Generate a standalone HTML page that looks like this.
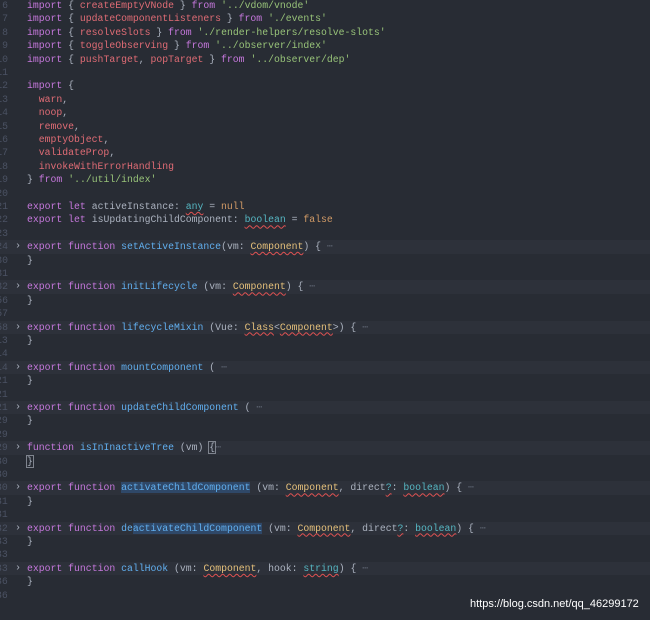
<!DOCTYPE html>
<html><head><meta charset="utf-8"><style>
html,body{margin:0;padding:0;}
body{width:650px;height:620px;background:#282c34;overflow:hidden;position:relative;font-family:"Liberation Mono",monospace;font-size:9.8px;color:#abb2bf;}
.l{position:absolute;left:0;width:650px;height:13.4px;line-height:13.4px;white-space:pre;}
.n{position:absolute;left:-4px;width:12px;text-align:right;color:#4b5263;overflow:hidden;}
.c{position:absolute;left:27px;}
.f{background:#2d313a;}
.ar{position:absolute;left:15px;color:#abb2bf;font-size:10px;}
.k{color:#c678dd}.r{color:#e06c75}.g{color:#98c379}.b{color:#61afef}.y{color:#e5c07b}.cy{color:#56b6c2}.o{color:#d19a66}
.w{text-decoration:underline wavy #e05252;text-decoration-thickness:1px;text-underline-offset:2px;}
.d{color:#5c6370}
.sel{background:#2f4868}
.bx{outline:1px solid #7f848e;}
.wm{position:absolute;left:470px;top:598px;font-family:"Liberation Sans",sans-serif;font-size:11px;color:#fff;}
</style></head><body>
<div class="l" style="top:-1px"><span class="n">6</span><span class="c"><span class="k">import</span> { <span class="r">createEmptyVNode</span> } <span class="k">from</span> <span class="g">'../vdom/vnode'</span></span></div>
<div class="l" style="top:12.4px"><span class="n">7</span><span class="c"><span class="k">import</span> { <span class="r">updateComponentListeners</span> } <span class="k">from</span> <span class="g">'./events'</span></span></div>
<div class="l" style="top:25.8px"><span class="n">8</span><span class="c"><span class="k">import</span> { <span class="r">resolveSlots</span> } <span class="k">from</span> <span class="g">'./render-helpers/resolve-slots'</span></span></div>
<div class="l" style="top:39.2px"><span class="n">9</span><span class="c"><span class="k">import</span> { <span class="r">toggleObserving</span> } <span class="k">from</span> <span class="g">'../observer/index'</span></span></div>
<div class="l" style="top:52.6px"><span class="n">10</span><span class="c"><span class="k">import</span> { <span class="r">pushTarget</span>, <span class="r">popTarget</span> } <span class="k">from</span> <span class="g">'../observer/dep'</span></span></div>
<div class="l" style="top:66px"><span class="n">11</span></div>
<div class="l" style="top:79.4px"><span class="n">12</span><span class="c"><span class="k">import</span> {</span></div>
<div class="l" style="top:92.8px"><span class="n">13</span><span class="c">  <span class="r">warn</span>,</span></div>
<div class="l" style="top:106.2px"><span class="n">14</span><span class="c">  <span class="r">noop</span>,</span></div>
<div class="l" style="top:119.6px"><span class="n">15</span><span class="c">  <span class="r">remove</span>,</span></div>
<div class="l" style="top:133px"><span class="n">16</span><span class="c">  <span class="r">emptyObject</span>,</span></div>
<div class="l" style="top:146.4px"><span class="n">17</span><span class="c">  <span class="r">validateProp</span>,</span></div>
<div class="l" style="top:159.8px"><span class="n">18</span><span class="c">  <span class="r">invokeWithErrorHandling</span></span></div>
<div class="l" style="top:173.2px"><span class="n">19</span><span class="c">} <span class="k">from</span> <span class="g">'../util/index'</span></span></div>
<div class="l" style="top:186.6px"><span class="n">20</span></div>
<div class="l" style="top:200px"><span class="n">21</span><span class="c"><span class="k">export</span> <span class="k">let</span> activeInstance: <span class="cy w">any</span> = <span class="o">null</span></span></div>
<div class="l" style="top:213.4px"><span class="n">22</span><span class="c"><span class="k">export</span> <span class="k">let</span> isUpdatingChildComponent: <span class="cy w">boolean</span> = <span class="o">false</span></span></div>
<div class="l" style="top:226.8px"><span class="n">23</span></div>

<div class="l f" style="top:240.2px"><span class="n">24</span><span class="ar">›</span><span class="c"><span class="k">export</span> <span class="k">function</span> <span class="b">setActiveInstance</span>(vm: <span class="y w">Component</span>) { <span class="d">⋯</span></span></div>
<div class="l" style="top:253.6px"><span class="n">30</span><span class="c">}</span></div>
<div class="l" style="top:267px"><span class="n">31</span></div>
<div class="l f" style="top:280.4px"><span class="n">32</span><span class="ar">›</span><span class="c"><span class="k">export</span> <span class="k">function</span> <span class="b">initLifecycle</span> (vm: <span class="y w">Component</span>) { <span class="d">⋯</span></span></div>
<div class="l" style="top:293.8px"><span class="n">56</span><span class="c">}</span></div>
<div class="l" style="top:307.2px"><span class="n">57</span></div>
<div class="l f" style="top:320.6px"><span class="n">58</span><span class="ar">›</span><span class="c"><span class="k">export</span> <span class="k">function</span> <span class="b">lifecycleMixin</span> (Vue: <span class="y w">Class</span>&lt;<span class="y w">Component</span>&gt;) { <span class="d">⋯</span></span></div>
<div class="l" style="top:334px"><span class="n">139</span><span class="c">}</span></div>
<div class="l" style="top:347.4px"><span class="n">140</span></div>
<div class="l f" style="top:360.8px"><span class="n">141</span><span class="ar">›</span><span class="c"><span class="k">export</span> <span class="k">function</span> <span class="b">mountComponent</span> ( <span class="d">⋯</span></span></div>
<div class="l" style="top:374.2px"><span class="n">210</span><span class="c">}</span></div>
<div class="l" style="top:387.6px"><span class="n">211</span></div>
<div class="l f" style="top:401px"><span class="n">212</span><span class="ar">›</span><span class="c"><span class="k">export</span> <span class="k">function</span> <span class="b">updateChildComponent</span> ( <span class="d">⋯</span></span></div>
<div class="l" style="top:414.4px"><span class="n">293</span><span class="c">}</span></div>
<div class="l" style="top:427.8px"><span class="n">294</span></div>
<div class="l f" style="top:441.2px"><span class="n">295</span><span class="ar">›</span><span class="c"><span class="k">function</span> <span class="b">isInInactiveTree</span> (vm) <span class="bx">{</span><span class="d">⋯</span></span></div>
<div class="l" style="top:454.6px"><span class="n">300</span><span class="c"><span class="bx">}</span></span></div>
<div class="l" style="top:468px"><span class="n">301</span></div>
<div class="l f" style="top:481.4px"><span class="n">302</span><span class="ar">›</span><span class="c"><span class="k">export</span> <span class="k">function</span> <span class="b sel">activateChildComponent</span> (vm: <span class="y w">Component</span>, direct<span class="cy w">?</span>: <span class="cy w">boolean</span>) { <span class="d">⋯</span></span></div>
<div class="l" style="top:494.8px"><span class="n">318</span><span class="c">}</span></div>
<div class="l" style="top:508.2px"><span class="n">319</span></div>
<div class="l f" style="top:521.6px"><span class="n">320</span><span class="ar">›</span><span class="c"><span class="k">export</span> <span class="k">function</span> <span class="b">de<span class="sel">activateChildComponent</span></span> (vm: <span class="y w">Component</span>, direct<span class="cy w">?</span>: <span class="cy w">boolean</span>) { <span class="d">⋯</span></span></div>
<div class="l" style="top:535px"><span class="n">334</span><span class="c">}</span></div>
<div class="l" style="top:548.4px"><span class="n">335</span></div>
<div class="l f" style="top:561.8px"><span class="n">336</span><span class="ar">›</span><span class="c"><span class="k">export</span> <span class="k">function</span> <span class="b">callHook</span> (vm: <span class="y w">Component</span>, hook: <span class="cy w">string</span>) { <span class="d">⋯</span></span></div>
<div class="l" style="top:575.2px"><span class="n">360</span><span class="c">}</span></div>
<div class="l" style="top:588.6px"><span class="n">361</span></div>
<div class="wm">https://blog.csdn.net/qq_46299172</div>
</body></html>
